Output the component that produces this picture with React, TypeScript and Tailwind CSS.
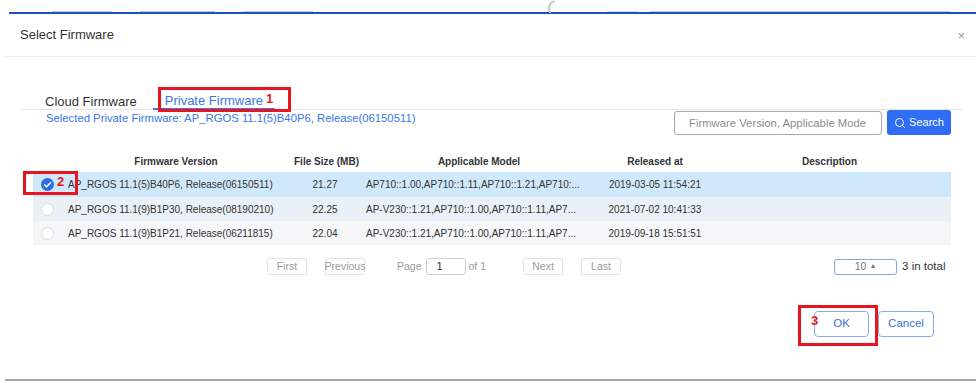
import { Search } from "lucide-react";

const rows = [
    {
        version: "AP_RGOS 11.1(5)B40P6, Release(06150511)",
        size: "21.27",
        model: "AP710::1.00,AP710::1.11,AP710::1.21,AP710:...",
        released: "2019-03-05 11:54:21",
        checked: true,
        bg: "bg-[#cfe8fb]",
        h: "h-[25px]",
    },
    {
        version: "AP_RGOS 11.1(9)B1P30, Release(08190210)",
        size: "22.25",
        model: "AP-V230::1.21,AP710::1.00,AP710::1.11,AP7...",
        released: "2021-07-02 10:41:33",
        checked: false,
        bg: "bg-[#e9f0f7]",
        h: "h-[24px]",
    },
    {
        version: "AP_RGOS 11.1(9)B1P21, Release(06211815)",
        size: "22.04",
        model: "AP-V230::1.21,AP710::1.00,AP710::1.11,AP7...",
        released: "2019-09-18 15:51:51",
        checked: false,
        bg: "bg-[#f4f6f8]",
        h: "h-[24px]",
    },
];

const cols = "grid grid-cols-[25px_236px_62px_246px_106px_243px]";

const PagerBtn = ({ label }: { label: string }) => (
    <div className="flex h-[17px] w-[40px] items-center justify-center whitespace-nowrap rounded-[2px] border border-[#e3e3e3] text-[10.5px] text-[#9a9a9a]">
        {label}
    </div>
);

const Radio = ({ checked }: { checked: boolean }) =>
    checked ? (
        <svg width="13" height="13" viewBox="0 0 13 13">
            <circle cx="6.5" cy="6.5" r="6.5" fill="#2f6fe3" />
            <path d="M3.6 6.7l2 2 3.9-4" fill="none" stroke="#fff" strokeWidth="1.4" strokeLinecap="round" strokeLinejoin="round" />
        </svg>
    ) : (
        <div className="h-[13px] w-[13px] rounded-full border border-[#dadada] bg-white" />
    );

const App = () => {
    return (
        <div className="relative h-[383px] w-[976px] overflow-hidden bg-white font-['Liberation_Sans',Arial,sans-serif] text-[#333]">
            {/* clipped page behind the dialog */}
            <div className="flex h-[12px] items-end">
                <div className="ml-[52px] h-[1px] w-[60px] bg-[#c3c7d0]" />
                <div className="ml-[28px] h-[1px] w-[75px] bg-[#c3c7d0]" />
                <div className="ml-[28px] h-[1px] w-[70px] bg-[#c3c7d0]" />
                <div className="ml-[294px] h-[1px] w-[31px] bg-[#d8dbe0]" />
                <div className="ml-[12px] h-[1px] w-[300px] bg-[#c3c7d0]" />
            </div>
            <svg className="absolute left-[545px] top-0" width="14" height="14" viewBox="0 0 14 14">
                <path d="M9 1.5 A7 7 0 0 0 5 12" fill="none" stroke="#c9c9c9" strokeWidth="2.2" strokeLinecap="round" />
            </svg>
            <div className="ml-[9px] h-[2px] bg-[#1c4fc6]" />

            {/* header */}
            <div className="ml-[5px] flex h-[43px] items-center justify-between border-b border-[#ececec] pl-[15px] pr-[11px]">
                <span className="text-[13px] text-[#333]">Select Firmware</span>
                <span className="text-[13px] leading-none text-[#999]">×</span>
            </div>

            {/* tabs */}
            <div className="ml-[20px] mt-[28px] flex w-[943px] gap-[5px] border-b border-[#e6e6e6] pl-[14px]">
                <div className="flex h-[24px] items-end px-[11px] text-[13px] leading-[15px] text-[#333]">
                    Cloud Firmware
                </div>
                <div className="-mb-px flex h-[25px] items-end border-b-2 border-[#3a77e8] px-[12px] text-[13px] leading-[15px] text-[#3a77e8]">
                    Private Firmware
                </div>
            </div>

            <div className="flex items-start justify-between pl-[46px] pr-[25px]">
                <span className="mt-[1px] text-[11.3px] leading-[14px] text-[#3a77e8]">
                    Selected Private Firmware: AP_RGOS 11.1(5)B40P6, Release(06150511)
                </span>
                <div className="flex items-start gap-[5px]">
                    <div className="mt-[1px] flex h-[24px] w-[208px] items-center whitespace-nowrap rounded-[3px] border border-[#a9a9a9] pl-[14px] text-[11.3px] text-[#8c8c8c]">
                        Firmware Version, Applicable Mode
                    </div>
                    <button className="flex h-[25px] w-[64px] items-center justify-center gap-[3px] rounded-[3px] bg-[#2f6df5] text-[11px] text-white">
                        <Search size={12} strokeWidth={2} />
                        Search
                    </button>
                </div>
            </div>

            {/* table */}
            <div className="ml-[33px] mt-[15px] w-[918px]">
                <div className={`${cols} h-[22px] items-center whitespace-nowrap text-[10px] font-bold text-[#333]`}>
                    <div />
                    <div className="text-center">Firmware Version</div>
                    <div className="text-center">File Size (MB)</div>
                    <div className="text-center">Applicable Model</div>
                    <div className="text-center">Released at</div>
                    <div className="text-center">Description</div>
                </div>
                {rows.map((r) => (
                    <div key={r.version} className={`${cols} ${r.h} ${r.bg} items-center whitespace-nowrap text-[10px] text-[#333]`}>
                        <div className="flex pl-[8px]">
                            <Radio checked={r.checked} />
                        </div>
                        <div className="pl-[10px]">{r.version}</div>
                        <div className="text-center">{r.size}</div>
                        <div className="pl-[10px]">{r.model}</div>
                        <div className="text-center">{r.released}</div>
                        <div />
                    </div>
                ))}
            </div>

            {/* pagination */}
            <div className="mt-[13px] flex h-[17px] items-center whitespace-nowrap pl-[267px] text-[10.5px] text-[#9a9a9a]">
                <PagerBtn label="First" />
                <div className="ml-[18px]">
                    <PagerBtn label="Previous" />
                </div>
                <span className="ml-[32px]">Page</span>
                <div className="ml-[4px] flex h-[17px] w-[40px] items-center rounded-[3px] border border-[#cfcfcf] pl-[10px] text-[11px] text-[#333]">
                    1
                </div>
                <span className="ml-[3px]">of 1</span>
                <div className="ml-[37px]">
                    <PagerBtn label="Next" />
                </div>
                <div className="ml-[18px]">
                    <PagerBtn label="Last" />
                </div>
                <div className="ml-[213px] flex h-[16px] w-[63px] items-center justify-center gap-[3px] rounded-[3px] border border-[#7ea6ee] text-[10.5px] text-[#777]">
                    10 <span className="text-[7px]">▲</span>
                </div>
                <span className="ml-[5px] text-[11.5px] text-[#333]">3 in total</span>
            </div>

            {/* footer */}
            <div className="mt-[36px] flex justify-end gap-[9px] pr-[42px]">
                <button className="flex h-[26px] w-[55px] items-center justify-center rounded-[4px] border border-[#8aaaf0] text-[11.5px] text-[#3a6fdc]">
                    OK
                </button>
                <button className="flex h-[26px] w-[56px] items-center justify-center rounded-[4px] border border-[#8aaaf0] text-[11.5px] text-[#3a6fdc]">
                    Cancel
                </button>
            </div>
            <div className="ml-[5px] mt-[42px] h-[2px] bg-[#a8a8a8]" />

            {/* annotations */}
            <div className="absolute left-[158px] top-[87px] h-[25px] w-[133px] border-[3px] border-[#e8141f]" />
            <span className="absolute left-[266px] top-[92px] text-[13px] font-bold leading-none text-[#e8141f]">1</span>
            <div className="absolute left-[23px] top-[171px] h-[24px] w-[55px] border-[3px] border-[#e8141f]" />
            <span className="absolute left-[57px] top-[175px] text-[13px] font-bold leading-none text-[#e8141f]">2</span>
            <div className="absolute left-[798px] top-[305px] h-[41px] w-[80px] border-[3px] border-[#e8141f]" />
            <span className="absolute left-[811px] top-[314px] text-[13px] font-bold leading-none text-[#e8141f]">3</span>
        </div>
    );
};

export default App;
